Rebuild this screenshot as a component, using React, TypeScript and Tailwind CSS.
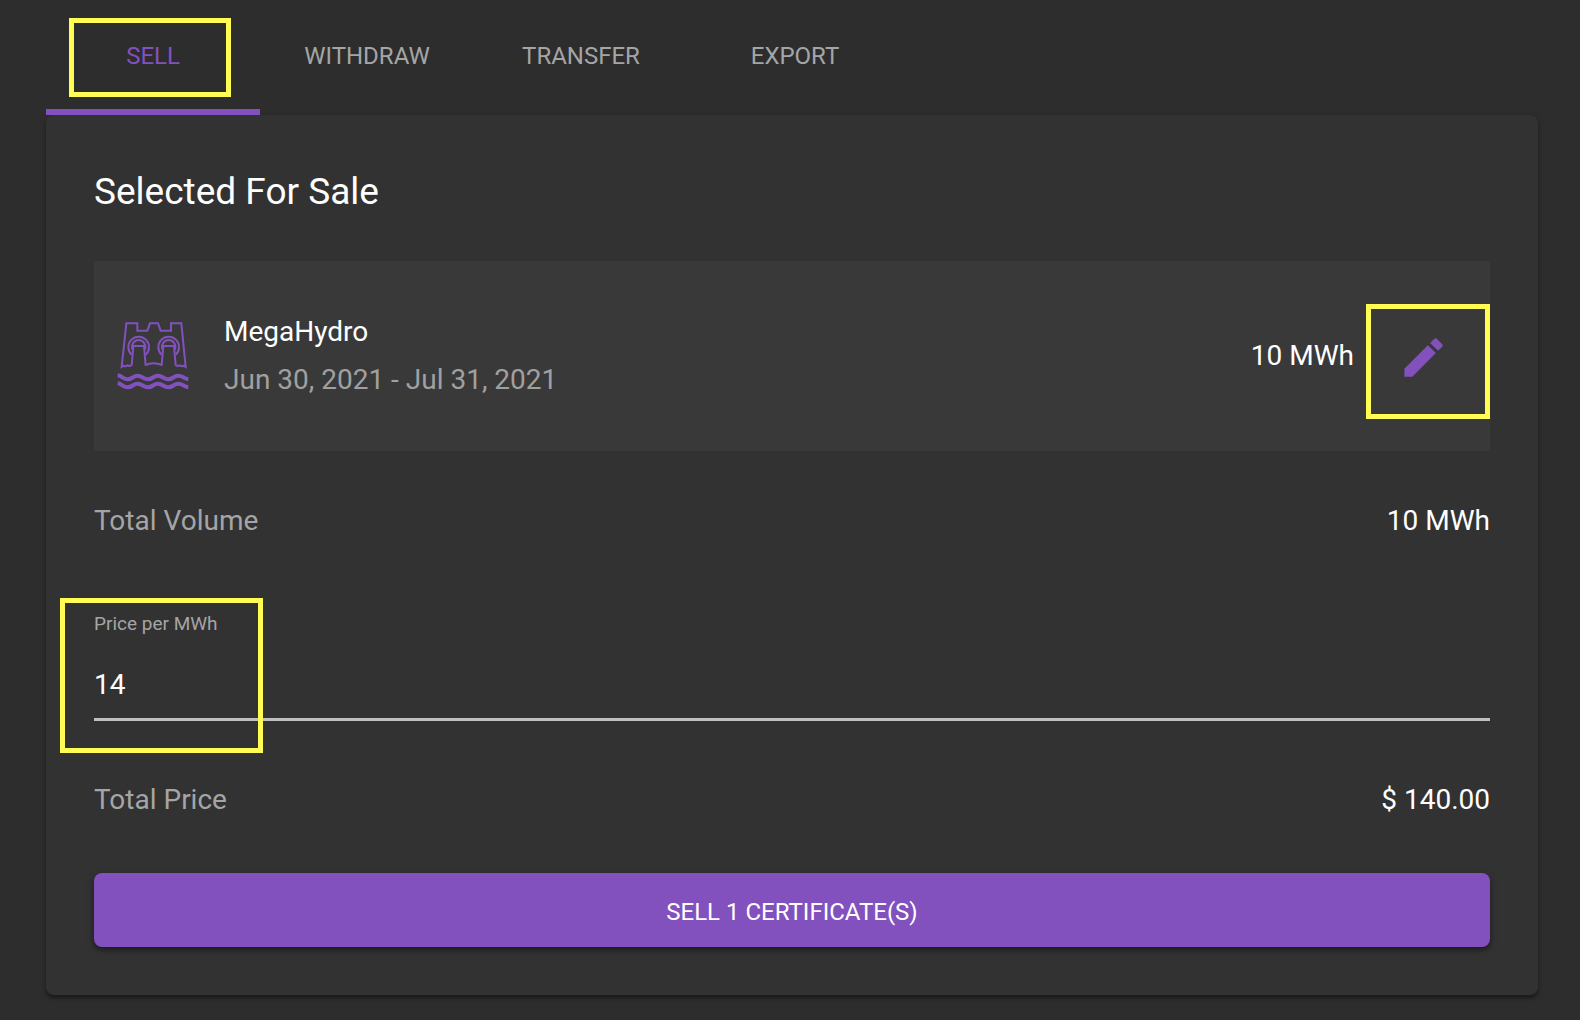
import { useState } from "react";

const TABS = ["SELL", "WITHDRAW", "TRANSFER", "EXPORT"];

function HydroIcon() {
  return (
    <svg
      viewBox="36 33 216 210"
      className="h-[70px] w-[72px] shrink-0"
      fill="none"
      stroke="#8251be"
      strokeWidth="6"
      aria-hidden="true"
    >
      <path d="M80 165 Q74 170 68 166 Q62 171 57 167 L50 171 L64 40 H97 V62 H127 L135 40 H159 L167 62 H198 V40 H229 L242 171 L235 167 Q230 171 224 166 Q218 170 212 165" />
      <path d="M121 165 Q146 154 171 165" />
      <path d="M80 167 L85 108 H117 L122 167" />
      <path d="M170 167 L175 108 H207 L212 167" />
      <path d="M80 134 A31 31 0 1 1 122 134" />
      <path d="M170 134 A31 31 0 1 1 212 134" />
      <path d="M83 119 A20 20 0 1 1 119 119" />
      <path d="M173 119 A20 20 0 1 1 209 119" />
      <path
        strokeWidth="12"
        d="M38 196 C52 198 54 208 68 208 C82 208 84 197 98 197 C112 197 115 208 129 208 C143 208 145 197 159 197 C173 197 176 208 190 208 C204 208 206 197 220 197 C234 197 236 207 250 208"
      />
      <path
        strokeWidth="12"
        d="M38 220 C52 222 54 232 68 232 C82 232 84 221 98 221 C112 221 115 232 129 232 C143 232 145 221 159 221 C173 221 176 232 190 232 C204 232 206 221 220 221 C234 221 236 231 250 232"
      />
    </svg>
  );
}

function PencilIcon() {
  return (
    <svg viewBox="0 0 24 24" className="size-[51px]" fill="#8251be" aria-hidden="true">
      <path d="M3 17.25V21h3.75L17.81 9.94l-3.75-3.75L3 17.25zM20.71 7.04c.39-.39.39-1.02 0-1.41l-2.34-2.34c-.39-.39-1.02-.39-1.41 0l-1.83 1.83 3.75 3.75 1.83-1.83z" />
    </svg>
  );
}

export default function App() {
  const [active, setActive] = useState("SELL");
  const [price, setPrice] = useState("14");

  return (
    <main className="min-h-screen bg-[#2d2d2d] pr-[42px] pb-[25px] pl-[46px] font-['Roboto',sans-serif] text-[28px] leading-[48px] text-white">
      <div role="tablist" className="flex">
        {TABS.map((tab) => (
          <button
            key={tab}
            type="button"
            role="tab"
            aria-selected={active === tab}
            onClick={() => setActive(tab)}
            className={`relative h-[115px] w-[214px] border-b-6 pt-[3px] text-2xl ${
              active === tab
                ? "border-[#8251be] text-[#8251be]"
                : "border-transparent text-[#a5a5a5]"
            }`}
          >
            {tab}
            {tab === "SELL" && (
              <span className="pointer-events-none absolute top-[18px] left-[23px] h-[79px] w-[162px] border-5 border-[#fffd54]" />
            )}
          </button>
        ))}
      </div>

      <section className="rounded-lg bg-[#323232] p-12 shadow-[0_3px_3px_rgba(0,0,0,0.3),0_2px_6px_rgba(0,0,0,0.2)]">
        <h1 className="mb-10 text-[37px] leading-[58px]">Selected For Sale</h1>

        <div className="flex h-[190px] items-center bg-[#393939] pl-[23px]">
          <HydroIcon />
          <div className="ml-[35px] flex-1">
            <p>MegaHydro</p>
            <p className="text-[#a0a0a0]">Jun 30, 2021 - Jul 31, 2021</p>
          </div>
          <p className="mr-3">10 MWh</p>
          <button
            type="button"
            aria-label="Edit volume"
            className="mt-[11px] flex h-[115px] w-[124px] items-center border-5 border-[#fffd54] pb-2 pl-[27px]"
          >
            <PencilIcon />
          </button>
        </div>

        <div className="mt-[46px] flex justify-between">
          <span className="text-[#a5a5a5]">Total Volume</span>
          <span>10 MWh</span>
        </div>

        <div className="relative mt-[67px] flex flex-col">
          <label htmlFor="price" className="text-[19px] leading-6 text-[#a5a5a5]">
            Price per MWh
          </label>
          <input
            id="price"
            type="text"
            inputMode="decimal"
            value={price}
            onChange={(e) => setPrice(e.target.value)}
            className="mt-[14px] h-[71px] w-full border-b-3 border-[#bfbfbf] bg-transparent outline-none"
          />
          <span className="pointer-events-none absolute -top-[14px] -left-[34px] h-[155px] w-[203px] border-5 border-[#fffd54]" />
        </div>

        <div className="mt-[55px] flex justify-between">
          <span className="text-[#a5a5a5]">Total Price</span>
          <span>$ 140.00</span>
        </div>

        <button
          type="button"
          className="mt-[49px] flex h-[74px] w-full items-center justify-center rounded-lg bg-[#8251be] pt-[3px] text-2xl shadow-[0_3px_4px_rgba(0,0,0,0.3),0_2px_8px_rgba(0,0,0,0.2)]"
        >
          SELL 1 CERTIFICATE(S)
        </button>
      </section>
    </main>
  );
}
